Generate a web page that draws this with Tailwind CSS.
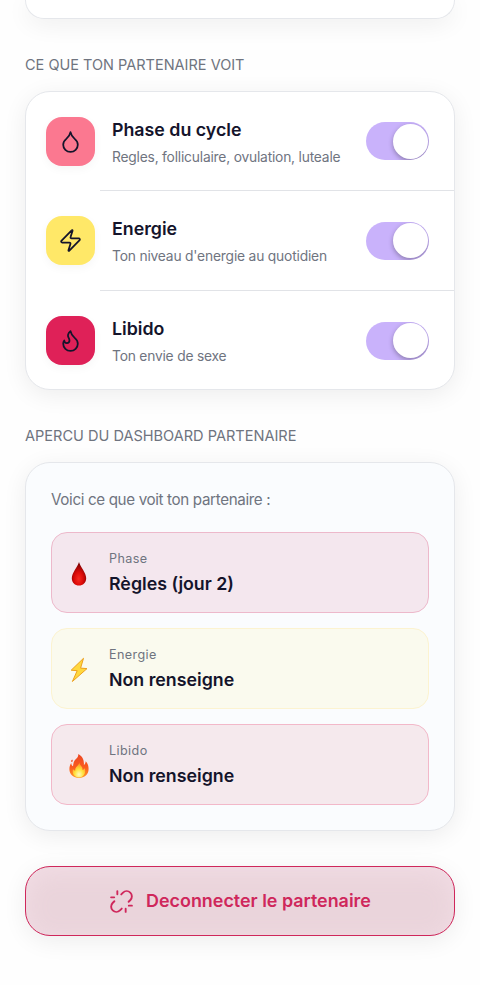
<!DOCTYPE html>
<html lang="fr">
<head>
<meta charset="utf-8">
<title>Partenaire</title>
<script src="https://cdn.jsdelivr.net/npm/@tailwindcss/browser@4"></script>
</head>
<body class="bg-[#fefefe] overflow-hidden font-['Inter',sans-serif] text-[#14142b]">
<main class="w-[480px] h-[985px] overflow-hidden pl-[25px] pr-[25px] flex flex-col">
  <section class="h-[19px] shrink-0 rounded-b-[25px] border border-t-0 border-[#e5e7eb] bg-white shadow-[0_5px_25px_rgba(0,0,0,0.07)]"></section>

  <h2 class="mt-[36px] h-[20px] shrink-0 leading-[20px] text-[14.5px] text-[#6f747f] whitespace-nowrap"><span>CE QUE TON PARTENAIRE VOIT</span></h2>

  <section class="mt-[16px] h-[299px] shrink-0 rounded-[25px] border border-[#e5e7eb] bg-white shadow-[0_5px_25px_rgba(0,0,0,0.07)] flex flex-col">
    <div class="h-[98px] flex items-center pl-[20px] pr-[25px]">
      <div class="size-[49px] rounded-[16px] bg-[#fb7890] shadow-[0_3px_10px_rgba(0,0,0,0.04)] flex items-center justify-center">
        <svg class="size-[25px]" viewBox="0 0 24 24" fill="none" stroke="#14142b" stroke-width="1.7" stroke-linecap="round" stroke-linejoin="round"><path d="M12 22a7 7 0 0 0 7-7c0-2-1-3.900-3-5.500s-3.500-4-4-6.500c-.5 2.500-2 4.900-4 6.500C6 11.100 5 13 5 15a7 7 0 0 0 7 7z"/></svg>
      </div>
      <div class="ml-[17px] flex-1 whitespace-nowrap pt-[3px]">
        <h3 class="text-[17.8px] leading-[24px] font-semibold"><span>Phase du cycle</span></h3>
        <p class="mt-[4px] text-[13.8px] leading-[22px] tracking-[-0.2px] text-[#6f747f]"><span>Regles, folliculaire, ovulation, luteale</span></p>
      </div>
      <div class="w-[63px] h-[38px] rounded-full bg-[#c9b2fb] overflow-hidden flex items-center justify-end pr-[1.500px]"><div class="size-[35px] rounded-full bg-white shadow-[0_2px_5px_rgba(0,0,0,0.300)]"></div></div>
    </div>
    <div class="h-px ml-[74px] bg-[#e1e3e7]"></div>
    <div class="h-[99px] flex items-center pl-[20px] pr-[25px]">
      <div class="size-[49px] rounded-[16px] bg-[#ffe868] shadow-[0_3px_10px_rgba(0,0,0,0.04)] flex items-center justify-center">
        <svg class="size-[25px]" viewBox="0 0 24 24" fill="none" stroke="#14142b" stroke-width="1.7" stroke-linecap="round" stroke-linejoin="round"><path d="M4 14a1 1 0 0 1-.78-1.630l9.900-10.200a.5.5 0 0 1 .86.46l-1.920 6.020A1 1 0 0 0 13 10h7a1 1 0 0 1 .78 1.630l-9.900 10.200a.5.5 0 0 1-.86-.46l1.920-6.020A1 1 0 0 0 11 14z"/></svg>
      </div>
      <div class="ml-[17px] flex-1 whitespace-nowrap pt-[3px]">
        <h3 class="text-[17.8px] leading-[24px] font-semibold"><span>Energie</span></h3>
        <p class="mt-[4px] text-[13.8px] leading-[22px] tracking-[-0.18px] text-[#6f747f]"><span>Ton niveau d'energie au quotidien</span></p>
      </div>
      <div class="w-[63px] h-[38px] rounded-full bg-[#c9b2fb] overflow-hidden flex items-center justify-end pr-[1.500px]"><div class="size-[35px] rounded-full bg-white shadow-[0_2px_5px_rgba(0,0,0,0.300)]"></div></div>
    </div>
    <div class="h-px ml-[74px] bg-[#e1e3e7]"></div>
    <div class="h-[98px] flex items-center pl-[20px] pr-[25px] pt-[1px]">
      <div class="size-[49px] rounded-[16px] bg-[#df2158] shadow-[0_3px_10px_rgba(0,0,0,0.04)] flex items-center justify-center">
        <svg class="size-[25px]" viewBox="0 0 24 24" fill="none" stroke="#14142b" stroke-width="1.7" stroke-linecap="round" stroke-linejoin="round"><path d="M8.500 14.500A2.500 2.500 0 0 0 11 12c0-1.380-.5-2-1-3-1.072-2.143-.224-4.054 2-6 .5 2.500 2 4.900 4 6.500 2 1.600 3 3.500 3 5.500a7 7 0 1 1-14 0c0-1.153.433-2.294 1-3a2.500 2.500 0 0 0 2.500 2.500z"/></svg>
      </div>
      <div class="ml-[17px] flex-1 whitespace-nowrap pt-[3px]">
        <h3 class="text-[17.8px] leading-[24px] font-semibold"><span>Libido</span></h3>
        <p class="mt-[4px] text-[13.8px] leading-[22px] tracking-[-0.2px] text-[#6f747f]"><span>Ton envie de sexe</span></p>
      </div>
      <div class="w-[63px] h-[38px] rounded-full bg-[#c9b2fb] overflow-hidden flex items-center justify-end pr-[1.500px]"><div class="size-[35px] rounded-full bg-white shadow-[0_2px_5px_rgba(0,0,0,0.300)]"></div></div>
    </div>
  </section>

  <h2 class="mt-[36px] h-[20px] shrink-0 leading-[20px] text-[14.55px] text-[#6f747f] whitespace-nowrap"><span>APERCU DU DASHBOARD PARTENAIRE</span></h2>

  <section class="mt-[16px] h-[369px] shrink-0 rounded-[25px] border border-[#e5e7eb] bg-[#fafcfe] shadow-[0_5px_25px_rgba(0,0,0,0.07)] px-[25px] pt-[25px] flex flex-col">
    <p class="h-[24px] leading-[24px] text-[15.2px] tracking-[-0.36px] text-[#6f747f] whitespace-nowrap"><span>Voici ce que voit ton partenaire :</span></p>
    <div class="mt-[20px] flex flex-col gap-[15px]">
      <div class="h-[81px] rounded-[16px] border border-[#edb9cb] bg-[#f4e7ee] flex items-center pl-[15px]">
        <svg class="mt-[3px] w-[24px] h-[28px]" viewBox="0 0 24 28">
          <defs><radialGradient id="drop" cx=".48" cy=".72" r=".65"><stop offset="0" stop-color="#f52a20"/><stop offset=".45" stop-color="#de0b09"/><stop offset="1" stop-color="#780000"/></radialGradient></defs>
          <path fill="url(#drop)" d="M12 2C10.800 6.500 4.800 12.800 4.800 18.200C4.800 22.600 8 25.500 12 25.500S19.200 22.600 19.200 18.200C19.200 12.800 13.200 6.500 12 2Z"/>
        </svg>
        <div class="ml-[18px] whitespace-nowrap">
          <p class="text-[12.6px] leading-[20px] text-[#6f747f] tracking-[0.4px]"><span>Phase</span></p>
          <p class="mt-[2px] text-[17.8px] leading-[26px] font-semibold"><span>Règles (jour 2)</span></p>
        </div>
      </div>
      <div class="h-[81px] rounded-[16px] border border-[#fcf3d0] bg-[#fafaee] flex items-center pl-[15px]">
        <svg class="mt-[3px] w-[24px] h-[28px]" viewBox="0 0 24 28">
          <path fill="#ffd83d" stroke="#eda01e" stroke-width="1" stroke-linejoin="round" d="M16.500 2.300L4.200 14.200L10.200 14.700L5.400 25.500L20 12.600L13.600 12.100Z"/>
        </svg>
        <div class="ml-[18px] whitespace-nowrap">
          <p class="text-[12.6px] leading-[20px] text-[#6f747f] tracking-[0.4px]"><span>Energie</span></p>
          <p class="mt-[2px] text-[17.8px] leading-[26px] font-semibold"><span>Non renseigne</span></p>
        </div>
      </div>
      <div class="h-[81px] rounded-[16px] border border-[#f2b8c9] bg-[#f5e9ed] flex items-center pl-[15px]">
        <svg class="mt-[3px] w-[24px] h-[28px]" viewBox="0 0 24 28">
          <defs>
            <linearGradient id="fire" x1="0" y1="0" x2="0" y2="1"><stop offset="0" stop-color="#ec4523"/><stop offset=".55" stop-color="#fa5b20"/><stop offset="1" stop-color="#ff9b24"/></linearGradient>
            <radialGradient id="core" cx=".5" cy=".8" r=".75"><stop offset="0" stop-color="#fffbc0"/><stop offset=".45" stop-color="#ffe33f"/><stop offset="1" stop-color="#ff8c20"/></radialGradient>
          </defs>
          <path fill="url(#fire)" d="M11.300 2C16 4.500 17.200 8.500 16.900 13C17.900 12.400 18.600 11 18.700 9.200C20.500 11 21.600 13.700 21.600 17C21.600 22.300 17.500 26 12 26S2.400 22.400 2.400 17.300C2.400 14.500 3.200 12.700 4.200 11C4.400 12.900 5 13.800 6 14.300C6.300 10.500 7.200 8.500 9.700 6.300C10.900 5.100 11.400 3.800 11.300 2Z"/>
          <path fill="#ef4b25" d="M5.200 7.600C6.200 8.800 5.700 9.900 4.700 10.100C3.700 9.700 3.900 8.500 5.200 7.600Z"/>
          <path fill="url(#core)" d="M12.400 10.500C13 14 16 14.500 15.500 18C16.600 17.700 17.300 17 17.600 16C19.600 21 16.500 25.400 12 25.400S4.700 21.500 6 17C6.600 18 7.300 18.500 8.300 18.500C7.800 15 11.400 14 12.400 10.500Z"/>
        </svg>
        <div class="ml-[18px] whitespace-nowrap">
          <p class="text-[12.6px] leading-[20px] text-[#6f747f] tracking-[0.4px]"><span>Libido</span></p>
          <p class="mt-[2px] text-[17.8px] leading-[26px] font-semibold"><span>Non renseigne</span></p>
        </div>
      </div>
    </div>
  </section>

  <button class="mt-[35px] h-[70px] shrink-0 rounded-[25px] border-[1.500px] border-[#cf275b] bg-[#ead4db] shadow-[0_5px_25px_rgba(0,0,0,0.07),inset_0_5px_25px_#f2dde5] flex items-center justify-center text-[#cf275b]">
    <svg class="size-[25px]" viewBox="0 0 24 24" fill="none" stroke="currentColor" stroke-width="1.800" stroke-linecap="round" stroke-linejoin="round"><path d="m18.840 12.250 1.720-1.710h-.02a5.004 5.004 0 0 0-.12-7.070 5.006 5.006 0 0 0-6.950 0l-1.720 1.710"/><path d="m5.170 11.750-1.710 1.710a5.004 5.004 0 0 0 .12 7.070 5.006 5.006 0 0 0 6.950 0l1.710-1.710"/><path d="M8 2v3M2 8h3M16 19v3M19 16h3"/></svg>
    <span class="ml-[12px] text-[17.9px] leading-[26px] font-semibold whitespace-nowrap">Deconnecter le partenaire</span>
  </button>
</main>
</body>
</html>
